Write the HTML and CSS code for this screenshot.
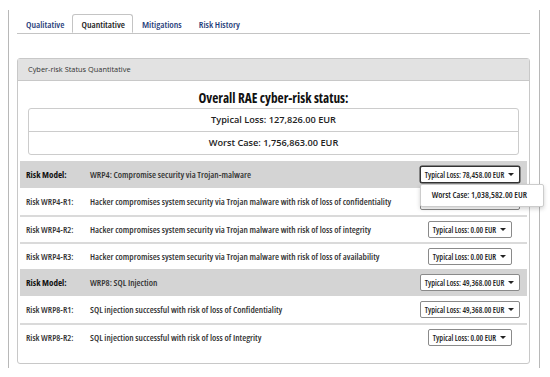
FILE: index.html
```html
<!DOCTYPE html>
<html lang="en">
<head>
    <meta charset="UTF-8">
    <meta name="viewport" content="width=device-width, initial-scale=1.0">
    <title>Cyber-risk Status</title>
    <link rel="stylesheet" href="styles.css">
</head>
<body>
    <div class="frame">
        <ul class="tabs">
            <li><a href="#">Qualitative</a></li>
            <li class="active"><a href="#">Quantitative</a></li>
            <li><a href="#">Mitigations</a></li>
            <li><a href="#">Risk History</a></li>
        </ul>

        <div class="panel">
            <div class="panel-heading">Cyber-risk Status Quantitative</div>
            <div class="panel-body">
                <h3 class="overall">Overall RAE cyber-risk status:</h3>
                <div class="totals">
                    <div>Typical Loss: 127,826.00 EUR</div>
                    <div>Worst Case: 1,756,863.00 EUR</div>
                </div>

                <div class="risks">
                    <div class="row model">
                        <span class="label">Risk Model:</span>
                        <span class="desc">WRP4: Compromise security via Trojan-malware</span>
                        <span class="cell">
                            <span class="dropdown open">
                                <button>Typical Loss: 78,458.00 EUR <span class="caret"></span></button>
                                <span class="menu">Worst Case: 1,038,582.00 EUR</span>
                            </span>
                        </span>
                    </div>
                    <div class="row item">
                        <span class="label">Risk WRP4-R1:</span>
                        <span class="desc">Hacker compromises system security via Trojan malware with risk of loss of confidentiality</span>
                        <span class="cell"><span class="dropdown"><button>Typical Loss: 78,458.00 EUR <span class="caret"></span></button></span></span>
                    </div>
                    <div class="row item">
                        <span class="label">Risk WRP4-R2:</span>
                        <span class="desc">Hacker compromises system security via Trojan malware with risk of loss of integrity</span>
                        <span class="cell"><span class="dropdown"><button>Typical Loss: 0.00 EUR <span class="caret"></span></button></span></span>
                    </div>
                    <div class="row item">
                        <span class="label">Risk WRP4-R3:</span>
                        <span class="desc">Hacker compromises system security via Trojan malware with risk of loss of availability</span>
                        <span class="cell"><span class="dropdown"><button>Typical Loss: 0.00 EUR <span class="caret"></span></button></span></span>
                    </div>
                    <div class="row model">
                        <span class="label">Risk Model:</span>
                        <span class="desc">WRP8: SQL Injection</span>
                        <span class="cell"><span class="dropdown"><button>Typical Loss: 49,368.00 EUR <span class="caret"></span></button></span></span>
                    </div>
                    <div class="row item">
                        <span class="label">Risk WRP8-R1:</span>
                        <span class="desc">SQL injection successful with risk of loss of Confidentiality</span>
                        <span class="cell"><span class="dropdown"><button>Typical Loss: 49,368.00 EUR <span class="caret"></span></button></span></span>
                    </div>
                    <div class="row item">
                        <span class="label">Risk WRP8-R2:</span>
                        <span class="desc">SQL injection successful with risk of loss of Integrity</span>
                        <span class="cell"><span class="dropdown"><button>Typical Loss: 0.00 EUR <span class="caret"></span></button></span></span>
                    </div>
                </div>
            </div>
        </div>
    </div>
</body>
</html>
```

FILE: styles.css
```css
body {
    font-family: "Open Sans", Arial, sans-serif;
    font-stretch: 75%;
    background-color: #fff;
    color: #222;
    margin: 0;
    padding: 0;
}
.frame {
    margin: 10px 10px 0 8px;
    height: 358px;
    box-sizing: border-box;
    border-left: 1px solid #b8b8b8;
    border-right: 1px solid #b8b8b8;
    padding: 4px 9px 0 8px;
}
.tabs {
    list-style: none;
    margin: 0;
    padding: 0;
    display: flex;
    border-bottom: 1px solid #c4c4c4;
    height: 19px;
}
.tabs li {
    margin-bottom: -1px;
}
.tabs a {
    display: block;
    height: 19px;
    box-sizing: border-box;
    padding: 3px 7px 0 8px;
    font-size: 9.6px;
    font-weight: 600;
    color: #1f3d7a;
    text-decoration: none;
    border: 1px solid transparent;
    border-radius: 3px 3px 0 0;
}
.tabs .active a {
    color: #222;
    background-color: #fff;
    border-color: #c4c4c4 #c4c4c4 #fff;
}
.panel {
    margin-top: 24px;
    border: 1px solid #c8c8c8;
    border-radius: 3px;
    height: 306px;
    box-sizing: border-box;
}
.panel-heading {
    background-color: #e2e2e2;
    border-bottom: 1px solid #c8c8c8;
    height: 22px;
    box-sizing: border-box;
    padding: 0 10px;
    line-height: 20px;
    font-size: 7.4px;
    font-stretch: 100%;
    font-weight: 500;
    color: #333;
}
.panel-body {
    padding: 0 2px;
}
.overall {
    margin: 8px 0 1px;
    text-align: center;
    font-size: 13.3px;
    line-height: 18px;
    font-weight: 700;
    color: #111;
}
.totals {
    margin: 0 8px 6px;
    border: 1px solid #ccc;
    border-radius: 3px;
}
.totals div {
    height: 22px;
    line-height: 22px;
    text-align: center;
    font-size: 9.2px;
    font-stretch: 100%;
    font-weight: 600;
    color: #222;
}
.totals div + div {
    border-top: 1px solid #ccc;
}
.row {
    display: grid;
    grid-template-columns: 70px 1fr 114px;
    align-items: center;
    height: 27px;
    box-sizing: border-box;
    color: #333;
}
.row.model {
    background-color: #d4d4d4;
}
.row.model .label {
    font-weight: 700;
    color: #111;
}
.row.item + .row.item {
    border-top: 2px solid #dadada;
}
.label {
    padding-left: 6px;
    font-size: 9px;
    font-weight: 600;
}
.desc {
    font-size: 9.2px;
    font-weight: 600;
    white-space: nowrap;
}
.cell {
    display: flex;
    justify-content: center;
}
.dropdown {
    position: relative;
}
.dropdown button {
    font-family: inherit;
    font-stretch: inherit;
    font-size: 8px;
    font-weight: 600;
    color: #222;
    background-color: #fff;
    border: 1px solid #8a8a8a;
    border-radius: 2px;
    height: 17px;
    padding: 0 5px 0 4px;
    display: flex;
    align-items: center;
    gap: 4px;
    cursor: pointer;
}
.dropdown.open button {
    border-color: #333;
    box-shadow: 0 0 0 0.5px #333;
}
.caret {
    display: inline-block;
    width: 0;
    height: 0;
    border-left: 3px solid transparent;
    border-right: 3px solid transparent;
    border-top: 3px solid #222;
}
.menu {
    position: absolute;
    top: 18px;
    left: 0;
    width: 124px;
    height: 23px;
    box-sizing: border-box;
    background-color: #fff;
    border: 1px solid #ccc;
    border-radius: 2px;
    box-shadow: 0 2px 4px rgba(0, 0, 0, 0.18);
    padding-left: 11px;
    line-height: 21px;
    font-size: 8.8px;
    font-weight: 600;
    color: #222;
    text-align: left;
    white-space: nowrap;
    z-index: 2;
}
```
